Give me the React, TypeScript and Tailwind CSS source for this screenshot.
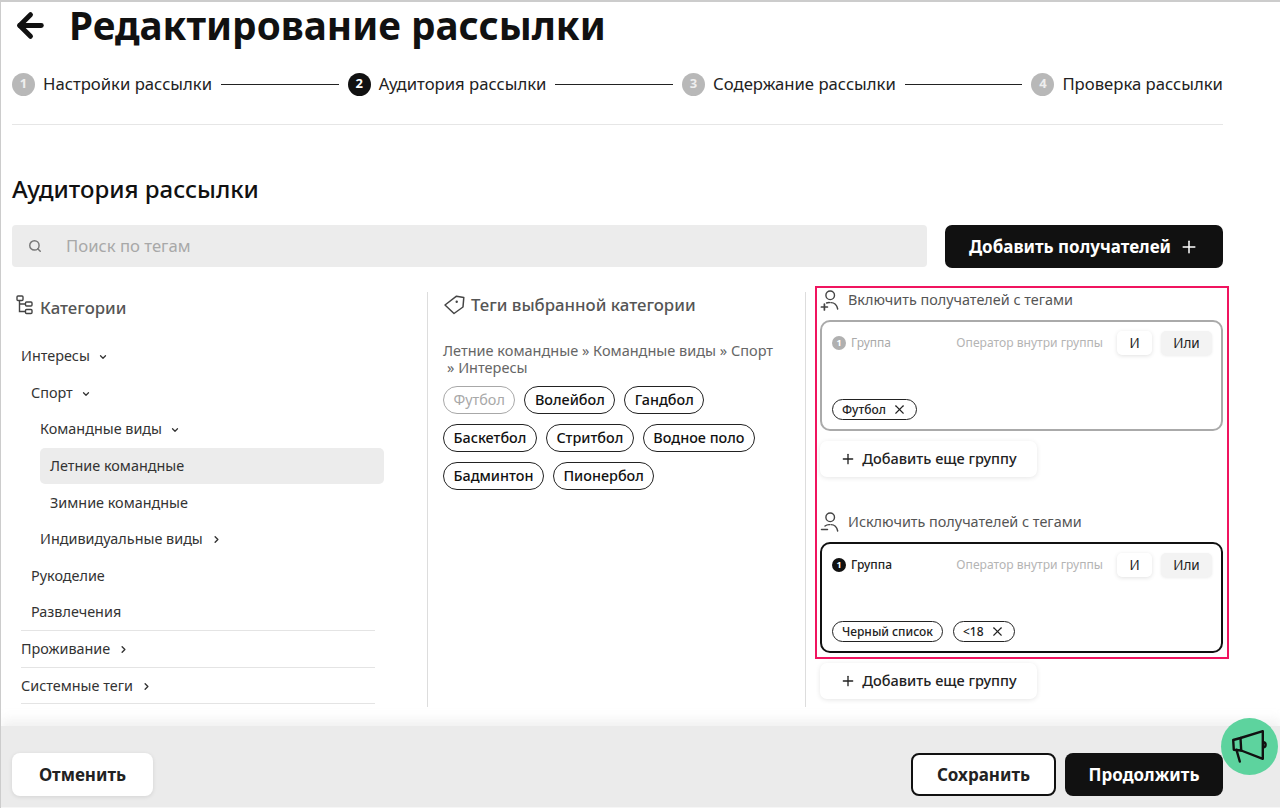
import React from "react";
import { ArrowLeft, Plus, X, Search, ChevronDown, ChevronRight } from "lucide-react";

function Step({ n, label, active }: { n: number; label: string; active?: boolean }) {
  return (
    <div className="flex items-center gap-[8px] shrink-0">
      <span className={`w-[23px] h-[23px] rounded-full flex items-center justify-center text-[13px] font-bold ${active ? "bg-[#111111] text-white" : "bg-[#b8b8b8] text-[#eeeeee]"}`}>{n}</span>
      <span className="text-[16.7px] leading-[24px] text-[#222222]">{label}</span>
    </div>
  );
}

function Line() {
  return <div className="flex-1 h-[1px] bg-[#222222] mx-[9px]" />;
}

function TreeItem({ label, pad, open, closed, selected, border }: { label: string; pad: string; open?: boolean; closed?: boolean; selected?: boolean; border?: boolean }) {
  return (
    <div className={`h-[36.7px] ${pad} ${border ? "border-b border-[#e4e4e4] w-[354px]" : ""}`}>
      <div className={`h-full flex items-center gap-[8px] rounded-[5px] text-[14.4px] text-[#333333] ${selected ? "bg-[#ececec] w-[344px] pl-[10px]" : ""}`}>
        <span>{label}</span>
        {open && <ChevronDown size={10} strokeWidth={3} className="text-[#333333] mt-[2px]" />}
        {closed && <ChevronRight size={11} strokeWidth={3} className="text-[#333333] mt-[1px]" />}
      </div>
    </div>
  );
}

function Tag({ label, muted }: { label: string; muted?: boolean }) {
  return (
    <span className={`h-[28px] px-[9.5px] rounded-full border-[1.5px] flex items-center text-[14.4px] ${muted ? "border-[#a8a8a8] text-[#a8a8a8]" : "font-medium border-[#222222] text-[#111111]"}`}>{label}</span>
  );
}

function SmallTag({ label, removable }: { label: string; removable?: boolean }) {
  return (
    <span className="h-[21px] px-[9px] rounded-full border-[1.5px] border-[#222222] flex items-center gap-[6px] text-[12px] font-medium text-[#222222]">
      {label}
      {removable && <X size={15} strokeWidth={1.8} />}
    </span>
  );
}

function GroupCard({ active, children }: { active?: boolean; children: React.ReactNode }) {
  return (
    <div className={`h-[111px] rounded-[10px] border-2 flex flex-col justify-between pl-[10px] pr-[9px] pt-[9px] pb-[9px] ${active ? "border-[#111111]" : "border-[#aaaaaa]"}`}>
      <div className="flex items-center">
        <span className={`w-[14px] h-[14px] rounded-full flex items-center justify-center text-[9px] font-bold ${active ? "bg-[#111111] text-white" : "bg-[#b0b0b0] text-white"}`}>1</span>
        <span className={`ml-[5px] text-[12px] ${active ? "text-[#222222] font-medium" : "text-[#aaaaaa]"}`}>Группа</span>
        <span className="ml-auto text-[12.1px] text-[#b4b4b4]">Оператор внутри группы</span>
        <span className="ml-[14px] w-[35px] h-[24px] rounded-[5px] bg-white shadow-[0_1px_4px_rgba(0,0,0,0.12)] flex items-center justify-center text-[13.5px] text-[#222222]">И</span>
        <span className="ml-[9px] w-[51px] h-[24px] rounded-[5px] bg-[#f3f3f3] shadow-[0_1px_3px_rgba(0,0,0,0.08)] flex items-center justify-center text-[13.5px] text-[#222222]">Или</span>
      </div>
      <div className="flex gap-[10px]">{children}</div>
    </div>
  );
}

function AddGroup() {
  return (
    <button className="h-[36px] w-[217px] rounded-[7px] bg-white shadow-[0_1px_5px_rgba(0,0,0,0.1)] flex items-center justify-center gap-[6px] text-[14.5px] font-medium text-[#222222]">
      <Plus size={16} strokeWidth={2} />
      Добавить еще группу
    </button>
  );
}

function UserIcon({ plus }: { plus?: boolean }) {
  return (
    <svg width="20" height="22" viewBox="0 0 20 22" fill="none" stroke="#444444" strokeWidth="1.4" strokeLinecap="round">
      <circle cx="10.2" cy="6.3" r="4.3" />
      <path d="M11 13.6c3.2 0 5.8 2.2 6.7 6.4" />
      {plus ? (
        <>
          <path d="M4.4 15v6M1.4 18h6" strokeWidth="1.7" />
          <path d="M6.6 14c1-.4 2.2-.5 3.2-.4" />
        </>
      ) : (
        <>
          <path d="M1.5 18.5h6" strokeWidth="1.5" />
          <path d="M5 15c1.2-1 3-1.5 4.6-1.4" />
        </>
      )}
    </svg>
  );
}

export default function App() {
  return (
    <div className="relative w-[1280px] h-[808px] overflow-hidden bg-white border-t-2 border-l-[1px] border-[#cccccc] flex flex-col font-['Noto_Sans','Open_Sans',sans-serif]">
      <div className="flex-1 pl-[11px] pr-[57px] min-h-0">
        <div className="flex items-center h-[51px] pb-[4px]">
          <ArrowLeft size={37} strokeWidth={3.2} className="text-[#111111]" />
          <h1 className="ml-[20px] text-[38.7px] leading-[47px] font-bold text-[#111111]">Редактирование рассылки</h1>
        </div>
        <div className="flex items-center mt-[19px] h-[24px]">
          <Step n={1} label="Настройки рассылки" />
          <Line />
          <Step n={2} label="Аудитория рассылки" active />
          <Line />
          <Step n={3} label="Содержание рассылки" />
          <Line />
          <Step n={4} label="Проверка рассылки" />
        </div>
        <div className="mt-[28px] h-[1px] bg-[#e6e6e6]" />
        <h2 className="mt-[47px] text-[24px] leading-[34px] font-medium text-[#111111]">Аудитория рассылки</h2>
        <div className="flex mt-[19px] gap-[18px]">
          <div className="flex-1 h-[42px] rounded-[4px] bg-[#ececec] flex items-center pl-[16px]">
            <Search size={14} strokeWidth={2.5} className="text-[#777777]" />
            <span className="ml-[24px] text-[16.7px] text-[#a8a8a8]">Поиск по тегам</span>
          </div>
          <button className="w-[278px] h-[43px] rounded-[7px] bg-[#111111] text-white flex items-center justify-center gap-[8px] text-[17px] font-bold">
            Добавить получателей
            <Plus size={20} strokeWidth={1.8} />
          </button>
        </div>
        <div className="flex mt-[24px] h-[415px]">
          <div className="w-[416px] shrink-0 border-r border-[#dddddd]">
            <div className="flex items-center gap-[6px] pl-[4px] h-[32px]">
              <svg width="18" height="20" viewBox="0 0 18 20" fill="none" stroke="#444444" strokeWidth="1.4" className="-mt-[6px]">
                <rect x="1" y="1" width="6" height="4.5" rx="1" />
                <rect x="9.5" y="7" width="6.5" height="4" rx="1" />
                <rect x="9.5" y="14.5" width="6.5" height="4" rx="1" />
                <path d="M3.5 5.5v11h6M3.5 9h6" />
              </svg>
              <span className="text-[16.8px] font-medium text-[#555555]">Категории</span>
            </div>
            <div className="mt-[13.5px]">
              <TreeItem label="Интересы" pad="pl-[9px]" open />
              <TreeItem label="Спорт" pad="pl-[19px]" open />
              <TreeItem label="Командные виды" pad="pl-[28px]" open />
              <TreeItem label="Летние командные" pad="pl-[28px]" selected />
              <TreeItem label="Зимние командные" pad="pl-[38px]" />
              <TreeItem label="Индивидуальные виды" pad="pl-[28px]" closed />
              <TreeItem label="Рукоделие" pad="pl-[19px]" />
              <TreeItem label="Развлечения" pad="ml-[9px] pl-[10px]" border />
              <TreeItem label="Проживание" pad="ml-[9px]" closed border />
              <TreeItem label="Системные теги" pad="ml-[9px]" closed border />
            </div>
          </div>
          <div className="w-[378px] shrink-0 border-r border-[#dddddd] pl-[15px] pr-[24px]">
            <div className="flex items-center gap-[6px] h-[26px]">
              <svg width="22" height="20" viewBox="0 0 22 20" fill="none" stroke="#444444" strokeWidth="1.5" strokeLinejoin="round">
                <path d="M2 10 13.5 1.2 20.8 2.5 20 12 11 18.5z" />
                <circle cx="13.7" cy="6.7" r="1.2" fill="#444444" stroke="none" />
              </svg>
              <span className="text-[16.8px] font-medium text-[#555555]">Теги выбранной категории</span>
            </div>
            <p className="mt-[24px] text-[14.5px] leading-[17px] text-[#666666]">
              Летние командные » Командные виды » Спорт<br />
              <span className="pl-[4px]">» Интересы</span>
            </p>
            <div className="flex flex-wrap gap-x-[9px] gap-y-[10px] mt-[10px]">
              <Tag label="Футбол" muted />
              <Tag label="Волейбол" />
              <Tag label="Гандбол" />
              <Tag label="Баскетбол" />
              <Tag label="Стритбол" />
              <Tag label="Водное поло" />
              <Tag label="Бадминтон" />
              <Tag label="Пионербол" />
            </div>
          </div>
          <div className="flex-1 pl-[14px] -mt-[2px]">
            <div className="flex items-center gap-[8px] h-[20px]">
              <UserIcon plus />
              <span className="text-[14.4px] text-[#555555]">Включить получателей с тегами</span>
            </div>
            <div className="mt-[10px]">
              <GroupCard>
                <SmallTag label="Футбол" removable />
              </GroupCard>
            </div>
            <div className="mt-[10px]">
              <AddGroup />
            </div>
            <div className="flex items-center gap-[8px] h-[20px] mt-[35px]">
              <UserIcon />
              <span className="text-[14.4px] text-[#555555]">Исключить получателей с тегами</span>
            </div>
            <div className="mt-[10px]">
              <GroupCard active>
                <SmallTag label="Черный список" />
                <SmallTag label="<18" removable />
              </GroupCard>
            </div>
            <div className="mt-[10px]">
              <AddGroup />
            </div>
          </div>
        </div>
      </div>
      <div className="h-[82px] shrink-0 bg-[#ebebeb] border-b border-[#f6f6f6] shadow-[0_-6px_10px_rgba(235,235,235,0.7)] flex items-end pb-[11px] pl-[11px] pr-[57px]">
        <button className="w-[141px] h-[43px] rounded-[8px] bg-white shadow-[0_1px_4px_rgba(0,0,0,0.1)] text-[17px] font-bold text-[#222222]">Отменить</button>
        <button className="ml-auto w-[145px] h-[43px] rounded-[8px] bg-white border-2 border-[#111111] text-[17px] font-bold text-[#222222]">Сохранить</button>
        <button className="ml-[9px] w-[158px] h-[43px] rounded-[8px] bg-[#111111] text-[17px] font-bold text-white">Продолжить</button>
      </div>
      <div className="absolute left-[814px] top-[284px] w-[414px] h-[373px] border-2 border-[#f0145f] pointer-events-none" />
      <div className="absolute left-[1220px] top-[716px] w-[57px] h-[57px] rounded-full bg-[#5dd39e] flex items-center justify-center">
        <svg width="38" height="36" viewBox="0 0 38 36" fill="none" stroke="#111111" strokeWidth="2.4" strokeLinejoin="round" strokeLinecap="round">
          <path d="M2.2 11 9.5 9 31.8 2.2 31.8 29.8 10.2 21.5 2.8 20.8z" />
          <path d="M9.5 9 10.2 21.5" />
          <path d="M5.5 20.8 8.8 32.5" />
          <path d="M32.8 13.2c2.4.4 2.4 4.6 0 5" />
        </svg>
      </div>
    </div>
  );
}
